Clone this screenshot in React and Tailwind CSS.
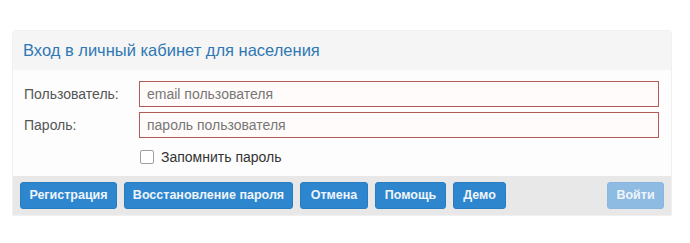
import React from 'react';

const BUTTONS = [
  { label: 'Регистрация', w: 'w-[97px]' },
  { label: 'Восстановление пароля', w: 'w-[169px]' },
  { label: 'Отмена', w: 'w-[68px]' },
  { label: 'Помощь', w: 'w-[71px]' },
  { label: 'Демо', w: 'w-[53px]' },
];

const App = () => {
  return (
    <div className="w-[690px] h-[243px] bg-white pt-[30px] pl-[12px]" style={{ fontFamily: '"Liberation Sans", Arial, sans-serif' }}>
      <div className="w-[660px] rounded-t-[4px] border border-[#f0f0f0]">
        {/* Header */}
        <div className="h-[39px] bg-[#f5f5f5] rounded-t-[4px] flex items-center pl-[10px]">
          <h3 className="text-[16.5px] text-[#2f78b4] leading-none">Вход в личный кабинет для населения</h3>
        </div>

        {/* Form */}
        <div className="bg-[#fdfdfd] pt-[11px] pb-[12px] pl-[11px] pr-[12px]">
          <div className="flex items-center h-[26px]">
            <label className="w-[115px] text-[14px] text-[#555]">Пользователь:</label>
            <input
              className="flex-1 h-[26px] border border-[#b25a56] bg-[#fffbfa] px-[7px] text-[14px] text-[#333] placeholder:text-[#777] outline-none"
              placeholder="email пользователя"
            />
          </div>
          <div className="flex items-center h-[26px] mt-[5px]">
            <label className="w-[115px] text-[14px] text-[#555]">Пароль:</label>
            <input
              type="password"
              className="flex-1 h-[26px] border border-[#b25a56] bg-[#fffbfa] px-[7px] text-[14px] text-[#333] placeholder:text-[#777] outline-none"
              placeholder="пароль пользователя"
            />
          </div>
          <div className="flex items-center mt-[12px] pl-[116px] h-[14px]">
            <span className="w-[14px] h-[14px] border border-[#a0a0a0] rounded-[2px] bg-white" />
            <span className="ml-[7px] text-[14px] text-[#333]">Запомнить пароль</span>
          </div>
        </div>

        {/* Footer */}
        <div className="h-[39px] bg-[#e8e8e8] flex items-center px-[7px]">
          <div className="flex gap-[7px]">
            {BUTTONS.map((b) => (
              <button
                key={b.label}
                className={`${b.w} h-[27px] rounded-[3px] bg-[#2e86cf] border border-[#2a7cc0] text-[#eef5fc] text-[12.5px] font-bold`}
              >
                {b.label}
              </button>
            ))}
          </div>
          <button className="ml-auto w-[57px] h-[27px] rounded-[3px] bg-[#8ebbe2] border border-[#88b6de] text-[#eef4fa] text-[12.5px] font-bold">
            Войти
          </button>
        </div>
      </div>
    </div>
  );
};

export default App;
